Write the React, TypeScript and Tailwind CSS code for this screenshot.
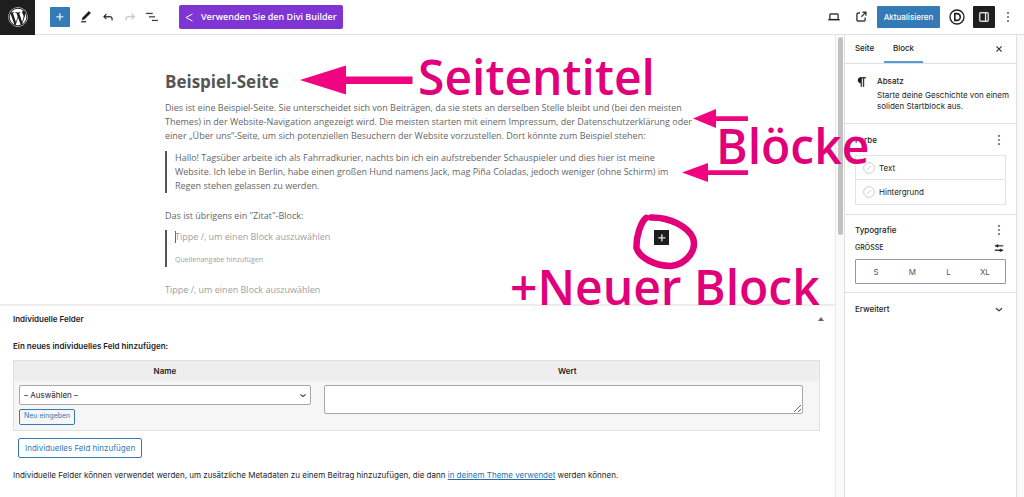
import React, { useState } from 'react';
import { FaWordpress } from 'react-icons/fa';

const ICONS = {
  plus: 'M11 12.5V17.5H12.5V12.5H17.5V11H12.5V6H11V11H6V12.5H11Z',
  pencil: 'm20.1 5.1L16.9 2 6.2 12.7l-1.3 4.4 4.5-1.3L20.1 5.1zM4 20.8h8v-1.5H4v1.5z',
  undo: 'M18.3 11.7c-.6-.6-1.4-.9-2.3-.9H6.7l2.9-3.3-1.1-1-4.5 5L8.5 16l1-1-2.7-2.7H16c.5 0 .9.2 1.3.5 1 1 1 3.4 1 4.5v.3h1.5v-.2c0-1.5 0-4.3-1.5-5.7z',
  redo: 'M15.6 6.5l-1.1 1 2.9 3.3H8c-.9 0-1.7.3-2.3.9-1.4 1.5-1.4 4.2-1.4 5.6v.2h1.5v-.3c0-1.1 0-3.5 1-4.5.3-.3.7-.5 1.3-.5h9.2L14.5 15l1.1 1.1 4.6-4.6-4.6-5z',
  list: 'M2 5h11v1.500H2V5Zm5 6h10v1.500H7V11Zm15 6H12v1.500h10V17Z',
  desktop: 'M20.5 16h-.7V8c0-1.1-.9-2-2-2H6.2c-1.1 0-2 .9-2 2v8h-.7c-.8 0-1.5.7-1.5 1.5h20c0-.8-.7-1.5-1.5-1.5zM5.7 8c0-.3.2-.5.5-.5h11.6c.3 0 .5.2.5.5v7.6H5.7V8z',
  external: 'M18.2 17c0 .7-.6 1.2-1.2 1.2H7c-.7 0-1.2-.6-1.2-1.2V7c0-.7.6-1.2 1.2-1.2h3.2V4.2H7C5.5 4.2 4.2 5.5 4.2 7v10c0 1.5 1.2 2.8 2.8 2.8h10c1.5 0 2.8-1.2 2.8-2.8v-3.6h-1.5V17zM14.9 3v1.5h3.7l-6.4 6.4 1.1 1.1 6.4-6.4v3.7h1.5V3h-6.3z',
  drawer: 'M18 4H6c-1.1 0-2 .9-2 2v12c0 1.1.9 2 2 2h12c1.1 0 2-.9 2-2V6c0-1.1-.9-2-2-2zm-4 14.5H6c-.3 0-.5-.2-.5-.5V6c0-.3.2-.5.5-.5h8v13zm4.5-.5c0 .3-.2.5-.5.5h-2.5v-13H18c.3 0 .5.2.5.5v12z',
  more: 'M13 20h-2v-2h2v2zm0-7h-2v-2h2v2zm0-7h-2V4h2v2z',
  close: 'M12 13.06l3.712 3.713 1.061-1.06L13.061 12l3.712-3.712-1.06-1.06L12 10.938 8.288 7.227l-1.061 1.06L10.939 12l-3.712 3.712 1.06 1.061L12 13.061z',
  paragraph: 'm9.996 14v6h1.504v-14.5h2.5v14.5h1.5v-14.5h3v-1.5h-8.504c-2.761 0-5 2.239-5 5 0 2.761 2.239 5 5 5z',
  settings: 'M19 7.5h-7.628c-.309-.874-1.142-1.5-2.122-1.5-.98 0-1.813.626-2.122 1.5H5V9h2.128c.309.874 1.142 1.5 2.122 1.5.98 0 1.813-.626 2.122-1.5H19V7.5zM19 15h-2.128c-.309-.874-1.142-1.5-2.122-1.5s-1.813.626-2.122 1.5H5v1.5h7.628c.309.874 1.142 1.5 2.122 1.5s1.813-.626 2.122-1.5H19V15z',
  chevron: 'M17.5 11.6L12 16l-5.5-4.4.9-1.2L12 14l4.5-3.6 1 1.2z',
};

const Icon: React.FC<{ name: keyof typeof ICONS; size?: number; className?: string }> = ({ name, size = 14, className }) => (
  <svg width={size} height={size} viewBox="0 0 24 24" fill="currentColor" stroke="currentColor" strokeWidth="0.5" className={className} aria-hidden="true">
    <path d={ICONS[name]} />
  </svg>
);

const Header = () => (
  <header className="flex h-[35px] items-center border-b border-[#e0e0e0] bg-white pr-[9px]">
    <a href="#dashboard" aria-label="Dashboard" className="flex h-[35px] w-[35px] items-center justify-center bg-[#1e1e1e] text-white">
      <FaWordpress size={20} />
    </a>
    <button aria-label="Block hinzufügen" className="ml-[15px] flex h-5 w-5 items-center justify-center rounded-[1px] bg-[#337ab7] text-white"><Icon name="plus" /></button>
    <div className="ml-[9px] flex gap-2">
      <button aria-label="Werkzeuge"><Icon name="pencil" /></button>
      <button aria-label="Rückgängig"><Icon name="undo" /></button>
      <button aria-label="Wiederholen" className="text-[#c0c0c0]"><Icon name="redo" /></button>
      <button aria-label="Listenansicht"><Icon name="list" /></button>
    </div>
    <button className="ml-5 flex h-6 items-center gap-2 rounded-[2px] bg-[#7e35d3] px-1.5 font-['Open_Sans',sans-serif] text-[9px] font-semibold text-white">
      <svg width="8" height="9" viewBox="0 0 8 9" fill="none" stroke="currentColor" aria-hidden="true"><path d="M7.5 1 1 4.5 7.5 8" /></svg>
      Verwenden Sie den Divi Builder
    </button>
    <div className="ml-auto flex items-center">
      <button aria-label="Ansicht"><Icon name="desktop" /></button>
      <a href="#vorschau" aria-label="Seite ansehen" className="ml-[13px]"><Icon name="external" /></a>
      <button className="ml-[9px] flex h-[22px] w-[63px] items-center justify-center rounded-[1px] bg-[#337ab7] text-[8px] font-medium text-white">Aktualisieren</button>
      <button aria-label="Divi" className="ml-[9px]">
        <svg width="16" height="16" viewBox="0 0 16 16" fill="none" stroke="currentColor" strokeWidth="1.3" aria-hidden="true">
          <circle cx="8" cy="8" r="7" />
          <path d="M5.8 4.6h2.1a3.4 3.4 0 0 1 0 6.8H5.8z" strokeWidth="1.6" />
        </svg>
      </button>
      <button aria-label="Einstellungen" className="ml-2 flex h-[22px] w-[22px] items-center justify-center rounded-[1px] bg-[#1e1e1e] text-white"><Icon name="drawer" /></button>
      <button aria-label="Optionen" className="ml-1.5"><Icon name="more" /></button>
    </div>
  </header>
);

const PostContent = () => (
  <article className="mx-auto w-full max-w-[505px] pt-[35px] font-['Open_Sans',sans-serif] text-[9px] leading-[14px] whitespace-nowrap text-[#666]">
    <h1 className="text-[17px] leading-6 font-bold text-[#555]">Beispiel-Seite</h1>
    <p className="mt-[7px]">
      Dies ist eine Beispiel-Seite. Sie unterscheidet sich von Beiträgen, da sie stets an derselben Stelle bleibt und (bei den meisten<br />
      Themes) in der Website-Navigation angezeigt wird. Die meisten starten mit einem Impressum, der Datenschutzerklärung oder<br />
      einer „Über uns“-Seite, um sich potenziellen Besuchern der Website vorzustellen. Dort könnte zum Beispiel stehen:
    </p>
    <blockquote className="mt-2 border-l-2 border-[#555] pl-2">
      Hallo! Tagsüber arbeite ich als Fahrradkurier, nachts bin ich ein aufstrebender Schauspieler und dies hier ist meine<br />
      Website. Ich lebe in Berlin, habe einen großen Hund namens Jack, mag Piña Coladas, jedoch weniger (ohne Schirm) im<br />
      Regen stehen gelassen zu werden.
    </blockquote>
    <p className="mt-4">Das ist übrigens ein "Zitat"-Block:</p>
    <div className="mt-[7px] flex h-[37px] justify-between border-l-2 border-[#555] pl-2 text-[#a0a0a0]">
      <div>
        <p className="flex items-center"><span className="-mr-px h-3 w-px bg-[#666]" />Tippe /, um einen Block auszuwählen</p>
        <p className="mt-[9px] text-[7px]">Quellenangabe hinzufügen</p>
      </div>
      <button aria-label="Neuer Block" className="mr-px flex h-[15px] w-[15px] items-center justify-center bg-[#1e1e1e] text-white"><Icon name="plus" /></button>
    </div>
    <p className="mt-4 text-[#a0a0a0]">Tippe /, um einen Block auszuwählen</p>
  </article>
);

const CustomFields = () => (
  <section className="mt-[7px] flex-1 border-t-2 border-b border-[#ededed] border-b-[#ddd] pt-2 pr-[15px] pl-[13px]">
    <div className="flex items-center justify-between">
      <h2 className="text-[8px] leading-[10px] font-semibold">Individuelle Felder</h2>
      <svg width="6" height="4" viewBox="0 0 6 4" fill="#666" className="-mr-1" aria-hidden="true"><path d="M0 4 3 0l3 4z" /></svg>
    </div>
    <p className="mt-[17px] text-[8px] leading-[10px] font-semibold">Ein neues individuelles Feld hinzufügen:</p>
    <table className="mt-[9px] w-full table-fixed border border-[#e0e0e0] bg-[#f6f6f6]">
      <thead>
        <tr className="h-5 bg-[#eee] text-[8px]">
          <th id="name" className="w-3/8 font-semibold">Name</th>
          <th id="wert" className="font-semibold">Wert</th>
        </tr>
      </thead>
      <tbody>
        <tr className="h-[50px] align-top">
          <td className="px-[5px] pt-1">
            <div className="relative">
              <select aria-labelledby="name" className="block h-5 w-full appearance-none rounded-[2px] border border-[#a5a8ab] bg-white px-1 text-[8px]">
                <option>– Auswählen –</option>
              </select>
              <Icon name="chevron" size={12} className="pointer-events-none absolute top-1 right-0.5" />
            </div>
            <button className="mt-1 flex h-4 items-center rounded-[2px] border border-[#337ab7] px-1 text-[7px] text-[#337ab7]">Neu eingeben</button>
          </td>
          <td className="pt-1 pr-4 pl-2">
            <textarea aria-labelledby="wert" className="block h-[29px] w-full rounded-[2px] border border-[#a5a8ab] bg-white" />
          </td>
        </tr>
      </tbody>
    </table>
    <button className="mt-[7px] ml-[5px] flex h-5 items-center rounded-[2px] border border-[#337ab7] px-1.5 text-[8px] text-[#337ab7]">Individuelles Feld hinzufügen</button>
    <p className="mt-[11px] mb-4 text-[8px] leading-3">
      Individuelle Felder können verwendet werden, um zusätzliche Metadaten zu einem Beitrag hinzuzufügen, die dann{' '}
      <a href="#theme" className="text-[#2271b1] underline">in deinem Theme verwendet</a> werden können.
    </p>
  </section>
);

const ColorRow: React.FC<{ label: string }> = ({ label }) => (
  <button className="flex h-6 w-full items-center gap-1 px-[7px]">
    <svg width="12" height="12" viewBox="0 0 12 12" fill="none" stroke="#d0d0d0" aria-hidden="true">
      <circle cx="6" cy="6" r="5.4" />
      <path d="m4 8 4-4" />
    </svg>
    {label}
  </button>
);

const Sidebar = () => {
  const [tab, setTab] = useState('Block');
  const [size, setSize] = useState('');

  return (
    <aside className="w-[173px] shrink-0 border-x border-[#e0e0e0] bg-white text-[8px]">
      <div className="flex h-[29px] items-stretch border-b border-[#e0e0e0] pr-2.5 font-medium">
        {['Seite', 'Block'].map((t) => (
          <button key={t} onClick={() => setTab(t)} className={`w-[39px] border-b-2 ${tab === t ? 'border-[#5b9bd5]' : 'border-transparent'}`}>{t}</button>
        ))}
        <button aria-label="Schließen" className="ml-auto"><Icon name="close" /></button>
      </div>

      <div className="flex gap-2 border-b border-[#e0e0e0] py-[11px] pl-2.5">
        <Icon name="paragraph" />
        <div>
          <h2 className="leading-3 font-medium">Absatz</h2>
          <p className="mt-[3px] leading-[11px]">Starte deine Geschichte von einem<br />soliden Startblock aus.</p>
        </div>
      </div>

      <div className="border-b border-[#e0e0e0] px-2.5 pt-[9px] pb-[9px]">
        <div className="flex items-center justify-between">
          <h2 className="font-medium">Farbe</h2>
          <button aria-label="Farboptionen"><Icon name="more" /></button>
        </div>
        <div className="mt-2 divide-y divide-[#e4e4e4] border border-[#e4e4e4]">
          <ColorRow label="Text" />
          <ColorRow label="Hintergrund" />
        </div>
      </div>

      <div className="border-b border-[#e0e0e0] px-2.5 pt-2 pb-2">
        <div className="flex items-center justify-between">
          <h2 className="font-medium">Typografie</h2>
          <button aria-label="Typografieoptionen"><Icon name="more" /></button>
        </div>
        <div className="mt-1 flex items-center justify-between">
          <h3 className="text-[7px] font-medium">GRÖSSE</h3>
          <button aria-label="Eigene Größe"><Icon name="settings" /></button>
        </div>
        <div className="mt-1 grid h-[25px] grid-cols-4 rounded-[1px] border border-[#999] px-0.5 text-[#555]">
          {['S', 'M', 'L', 'XL'].map((s) => (
            <button key={s} onClick={() => setSize(s)} className={size === s ? 'bg-[#1e1e1e] text-white' : ''}>{s}</button>
          ))}
        </div>
      </div>

      <button className="flex h-8 w-full items-center justify-between px-2.5 font-medium">
        Erweitert
        <Icon name="chevron" />
      </button>
    </aside>
  );
};

// Hand-drawn tutorial notes that lie over the editor
const Annotations = () => (
  <div className="pointer-events-none absolute inset-0 font-['Open_Sans',sans-serif] text-[48px] leading-[48px] font-semibold whitespace-nowrap text-[#e2007a]">
    <svg width="900" height="310" viewBox="0 0 900 310" className="absolute top-0 left-0" fill="#f0047f" aria-hidden="true">
      <path d="M300 80 346 65.500V76.500H412.500V84H346V94.500z" />
      <path d="M693 118.500 716 109V116.300H748V121H716V128z" />
      <path d="M682 172.500 708 163V170.300H748V175H708V182z" />
      <path d="M651 217.500C670 217 688 227 693 238C697 250 687 264 671 266C655 266 640 258 636.500 248C636 236 641 222 646 218" fill="none" stroke="#e2007a" strokeWidth="6.500" strokeLinecap="round" strokeLinejoin="round" />
    </svg>
    <span className="absolute top-[53px] left-[418px]">Seitentitel</span>
    <span className="absolute top-[122px] left-[716px]">Blöcke</span>
    <span className="absolute top-[263px] left-[510px]">+Neuer Block</span>
  </div>
);

export default function App() {
  return (
    <div className="relative flex min-h-screen flex-col overflow-hidden bg-white font-['Inter',sans-serif] text-[#1e1e1e]">
      <Header />
      <div className="flex flex-1">
        <main className="flex min-w-0 flex-1 flex-col">
          <PostContent />
          <CustomFields />
        </main>
        <div className="flex w-[9px] shrink-0 justify-center border-l border-[#e8e8e8] bg-[#fafafa] pt-0.5">
          <div className="h-[198px] w-[5px] rounded-full bg-[#c1c1c1]" />
        </div>
        <Sidebar />
        <div className="w-[7px] shrink-0 bg-[#fafafa]" />
      </div>
      <Annotations />
    </div>
  );
}
